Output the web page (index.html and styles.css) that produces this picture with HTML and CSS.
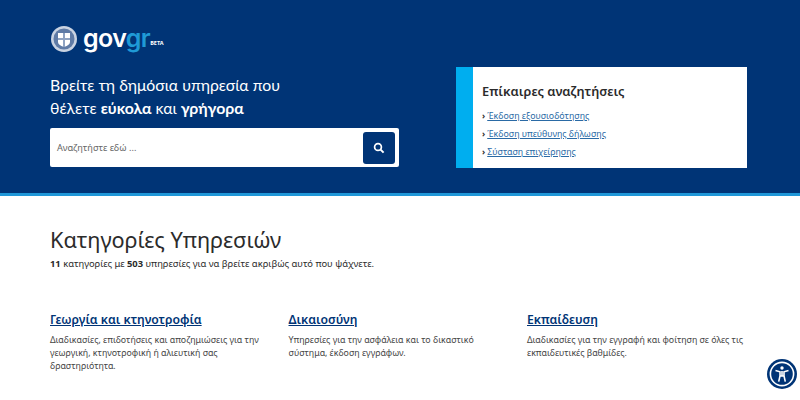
FILE: index.html
```html
<!DOCTYPE html>
<html lang="el">
<head>
  <meta charset="UTF-8">
  <title>gov.gr</title>
  <link rel="stylesheet" href="styles.css">
</head>
<body>
<header class="hero">
  <div class="logo">
    <svg class="emblem" width="28" height="28" viewBox="0 0 28 28">
      <circle cx="14" cy="14" r="13" fill="#c9d3e2"/>
      <circle cx="14" cy="14" r="10.5" fill="#5f7ba6"/>
      <path d="M8 8h12v9q0 3-6 5q-6-2-6-5z" fill="#fff"/>
      <path d="M13 8h2v14h-2zM8 13h12v2H8z" fill="#8fa3c2"/>
    </svg>
    <span class="logo-text">gov<span class="logo-gr">gr</span></span>
    <span class="beta">BETA</span>
  </div>
  <div class="hero-row">
    <div class="hero-left">
      <h1 class="hero-title">Βρείτε τη δημόσια υπηρεσία που<br>θέλετε <b>εύκολα</b> και <b>γρήγορα</b></h1>
      <form class="search">
        <span class="search-text">Αναζητήστε εδώ ...</span>
        <button class="search-btn" type="button">
          <svg width="12" height="12" viewBox="0 0 12 12"><circle cx="5" cy="5" r="3.4" fill="none" stroke="#fff" stroke-width="1.7"/><path d="M7.6 7.6l3 3" stroke="#fff" stroke-width="2"/></svg>
        </button>
      </form>
    </div>
    <aside class="trending">
      <h2>Επίκαιρες αναζητήσεις</h2>
      <ul>
        <li><a href="#">Έκδοση εξουσιοδότησης</a></li>
        <li><a href="#">Έκδοση υπεύθυνης δήλωσης</a></li>
        <li><a href="#">Σύσταση επιχείρησης</a></li>
      </ul>
    </aside>
  </div>
</header>

<main class="content">
  <h2 class="page-title">Κατηγορίες Υπηρεσιών</h2>
  <p class="summary"><b>11</b> κατηγορίες με <b>503</b> υπηρεσίες για να βρείτε ακριβώς αυτό που ψάχνετε.</p>
  <div class="cats">
    <div class="cat">
      <a href="#">Γεωργία και κτηνοτροφία</a>
      <p>Διαδικασίες, επιδοτήσεις και αποζημιώσεις για την γεωργική, κτηνοτροφική ή αλιευτική σας δραστηριότητα.</p>
    </div>
    <div class="cat">
      <a href="#">Δικαιοσύνη</a>
      <p>Υπηρεσίες για την ασφάλεια και το δικαστικό σύστημα, έκδοση εγγράφων.</p>
    </div>
    <div class="cat">
      <a href="#">Εκπαίδευση</a>
      <p>Διαδικασίες για την εγγραφή και φοίτηση σε όλες τις εκπαιδευτικές βαθμίδες.</p>
    </div>
  </div>
</main>

<button class="a11y" type="button" aria-label="accessibility">
  <svg width="30" height="30" viewBox="0 0 30 30">
    <circle cx="15" cy="15" r="11.6" fill="none" stroke="#fff" stroke-width="1.6"/>
    <circle cx="15" cy="9" r="1.7" fill="#fff"/>
    <path d="M8.5 11.6l4.5 1.2v4.2l-1.3 5.6M21.5 11.6l-4.5 1.2v4.2l1.3 5.6M13 17h4M15 12v5" fill="none" stroke="#fff" stroke-width="1.6"/>
  </svg>
</button>
</body>
</html>
```

FILE: styles.css
```css
* {
  margin: 0;
  padding: 0;
  box-sizing: border-box;
}

body {
  font-family: "Noto Sans", sans-serif;
  color: #2b2b2b;
  background: #fff;
  overflow: hidden;
}

.hero {
  height: 196px;
  background: #003476;
  border-bottom: 3px solid #1f97d8;
  padding: 25px 53px 0 50px;
  color: #fff;
}

.logo {
  display: flex;
  align-items: center;
  height: 28px;
}

.logo-text {
  margin-left: 5px;
  padding-bottom: 2px;
  font-family: "Inter", sans-serif;
  font-size: 25px;
  font-weight: 600;
  line-height: 26px;
  letter-spacing: -0.6px;
}

.logo-gr {
  color: #1f9ad6;
}

.beta {
  margin: 8px 0 0 0;
  font-size: 5.5px;
  font-weight: 700;
}

.hero-row {
  display: flex;
  justify-content: space-between;
  margin-top: 14px;
}

.hero-left {
  width: 349px;
}

.hero-title {
  margin-top: 6px;
  font-family: "Lato", sans-serif;
  font-size: 15.8px;
  font-weight: 400;
  line-height: 23px;
}

.search {
  display: flex;
  align-items: center;
  justify-content: space-between;
  height: 39px;
  margin-top: 9px;
  padding: 3px 4px 3px 7px;
  background: #fff;
  border-radius: 2px;
}

.search-text {
  font-size: 9.2px;
  color: #666;
}

.search-btn {
  display: flex;
  align-items: center;
  justify-content: center;
  width: 32px;
  height: 32px;
  background: #003476;
  border: 0;
  border-radius: 3px;
}

.trending {
  width: 291px;
  height: 101px;
  background: #fff;
  border-left: 17px solid #00aeef;
  padding: 15px 10px 0 9px;
  color: #2b2b2b;
}

.trending h2 {
  font-size: 12.8px;
  font-weight: 600;
  line-height: 18px;
}

.trending ul {
  margin-top: 7px;
  list-style: none;
}

.trending li {
  font-size: 8.8px;
  line-height: 18px;
}

.trending li::before {
  content: "›";
  margin-right: 2px;
  font-weight: 700;
}

.trending a {
  color: #2a6aa5;
}

.content {
  padding: 29px 50px 0;
}

.page-title {
  font-size: 21.7px;
  font-weight: 400;
  line-height: 29px;
}

.summary {
  margin-top: 3px;
  font-size: 9.4px;
  line-height: 14px;
}

.cats {
  display: grid;
  grid-template-columns: repeat(3, 218px);
  column-gap: 20.5px;
  margin-top: 36px;
}

.cat a {
  font-size: 12.2px;
  font-weight: 600;
  line-height: 17px;
  color: #003476;
}

.cat p {
  margin-top: 5px;
  font-size: 8.8px;
  line-height: 13px;
  color: #444;
}

.a11y {
  position: absolute;
  left: 767px;
  top: 359px;
  display: flex;
  align-items: center;
  justify-content: center;
  width: 30px;
  height: 30px;
  background: #003476;
  border: 0;
  border-radius: 50%;
}
```
